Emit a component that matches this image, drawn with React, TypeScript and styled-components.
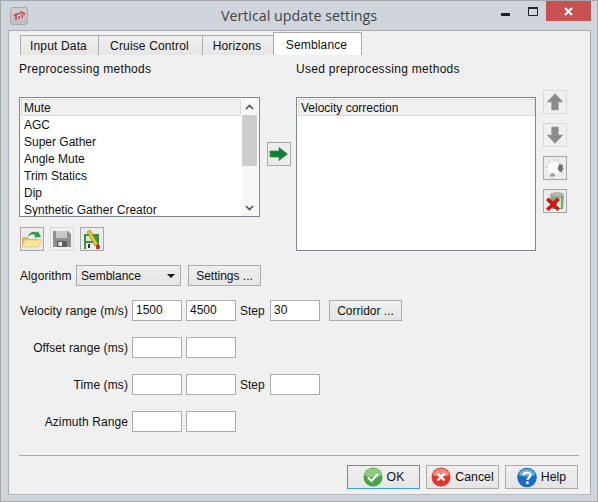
import styled, { createGlobalStyle } from 'styled-components';

const GlobalStyle = createGlobalStyle`
  html, body {
    margin: 0;
    padding: 0;
    background: #d0d5dc;
  }
  body {
    font-family: "Liberation Sans", Arial, sans-serif;
    font-size: 12px;
    color: #111;
  }
`;

const Window = styled.div`
  width: 598px;
  height: 502px;
  box-sizing: border-box;
  border: 1px solid #a4a8ad;
  background: #d0d5dc;
  display: flex;
  flex-direction: column;
`;

const TitleBar = styled.div`
  height: 29px;
  flex: none;
  display: flex;
  align-items: flex-start;
  position: relative;
`;

const AppIcon = styled.div`
  width: 16px;
  height: 16px;
  margin: 6px 0 0 9px;
  border: 1px solid #a9a9a9;
  border-radius: 3px;
  background: linear-gradient(#cfcfcf, #bdbdbd);
  display: flex;
  align-items: center;
  justify-content: center;
`;

const Title = styled.div`
  position: absolute;
  left: 0;
  right: 0;
  top: 5px;
  text-align: center;
  font-family: "Open Sans", "Noto Sans", sans-serif;
  font-size: 14.3px;
  line-height: 20px;
  color: #3f4348;
`;

const WindowControls = styled.div`
  margin-left: auto;
  margin-right: 6px;
  display: flex;
  align-items: flex-start;
`;

const WindowControl = styled.div<{ $close?: boolean }>`
  width: ${({ $close }) => ($close ? '45px' : '27px')};
  height: 20px;
  background: ${({ $close }) => ($close ? '#c75050' : 'transparent')};
  display: flex;
  align-items: center;
  justify-content: center;
`;

const Panel = styled.div`
  flex: 1;
  margin: 0 6px 6px 7px;
  border: 1px solid #a9adb2;
  border-bottom-color: #b6b9bd;
  background: #f0f0f0;
  padding: 1px 10px 0 10px;
  display: flex;
  flex-direction: column;
`;

const TabBar = styled.div`
  height: 23px;
  display: flex;
  align-items: flex-end;
  padding-left: 1px;
`;

const Tab = styled.div<{ $active?: boolean; $width: number }>`
  width: ${({ $width }) => $width}px;
  height: ${({ $active }) => ($active ? '23px' : '20px')};
  box-sizing: border-box;
  border: 1px solid #acacac;
  border-right-width: ${({ $active }) => ($active ? '1px' : '0')};
  border-bottom: none;
  background: ${({ $active }) =>
    $active ? '#fff' : 'linear-gradient(#f0f0f0, #e5e5e5)'};
  display: flex;
  align-items: center;
  justify-content: center;
  padding: 1px 2px 0 0;
  letter-spacing: 0.15px;
`;

const MethodsArea = styled.div`
  display: flex;
  height: 196px;
`;

const MethodColumn = styled.div<{ $width: number }>`
  width: ${({ $width }) => $width}px;
  flex: none;
  display: flex;
  flex-direction: column;
`;

const SectionLabel = styled.div`
  height: 14px;
  margin-top: 7px;
  line-height: 14px;
  letter-spacing: 0.3px;
`;

const ListBox = styled.div<{ $height: number }>`
  height: ${({ $height }) => $height}px;
  box-sizing: border-box;
  margin-top: 21px;
  border: 1px solid #828790;
  background: #fff;
  display: flex;
  overflow: hidden;
`;

const ListItems = styled.div`
  flex: 1;
  padding: 1px 0 0 1px;
  min-width: 0;
`;

const ListItem = styled.div<{ $selected?: boolean }>`
  height: 17px;
  box-sizing: border-box;
  line-height: 15px;
  padding: 1px 0 0 2px;
  border: 1px solid ${({ $selected }) => ($selected ? '#dcdcdc' : 'transparent')};
  background: ${({ $selected }) => ($selected ? '#f0f0f0' : 'transparent')};
  white-space: nowrap;
`;

const ScrollTrack = styled.div`
  width: 17px;
  margin-left: 1px;
  background: #f8f8f8;
  display: flex;
  flex-direction: column;
`;

const ScrollArrow = styled.div`
  width: 15px;
  height: 17px;
  flex: none;
  display: flex;
  align-items: center;
  justify-content: center;
`;

const ScrollThumb = styled.div`
  width: 15px;
  height: 51px;
  background: #cdcdcd;
`;

const ScrollGap = styled.div`
  flex: 1;
`;

const TransferColumn = styled.div`
  width: 36px;
  flex: none;
  padding: 87px 0 0 7px;
  box-sizing: border-box;
`;

const SideButtons = styled.div`
  margin: 35px 0 0 7px;
  display: flex;
  flex-direction: column;
  gap: 9px;
`;

const IconButton = styled.div<{ $disabled?: boolean }>`
  width: 24px;
  height: 24px;
  box-sizing: border-box;
  border: 1px solid ${({ $disabled }) => ($disabled ? '#d9d9d9' : '#a8a8a8')};
  background: ${({ $disabled }) => ($disabled ? '#f0f0f0' : '#ececec')};
  display: flex;
  align-items: center;
  justify-content: center;
`;

const FileButtons = styled.div`
  margin: 10px 0 0 1px;
  display: flex;
  gap: 6px;
`;

const Form = styled.div`
  margin: 14px 0 0 1px;
  display: flex;
  flex-direction: column;
`;

const AlgorithmRow = styled.div`
  height: 21px;
  display: flex;
  align-items: center;
`;

const AlgorithmLabel = styled.div`
  width: 52px;
  letter-spacing: 0.1px;
`;

const FieldRow = styled.div<{ $gap: number }>`
  height: 21px;
  margin-top: ${({ $gap }) => $gap}px;
  display: flex;
  align-items: center;
`;

const SelectBox = styled.div`
  width: 105px;
  height: 21px;
  box-sizing: border-box;
  margin-left: 4px;
  border: 1px solid #acacac;
  background: linear-gradient(#f0f0f0, #e5e5e5);
  padding: 0 5px 0 4px;
  display: flex;
  align-items: center;
  justify-content: space-between;
`;

const Button = styled.div<{ $width: number; $gap: number }>`
  width: ${({ $width }) => $width}px;
  height: 21px;
  box-sizing: border-box;
  margin-left: ${({ $gap }) => $gap}px;
  border: 1px solid #acacac;
  background: linear-gradient(#f0f0f0, #e5e5e5);
  display: flex;
  align-items: center;
  justify-content: center;
`;

const FieldLabel = styled.div`
  width: 108px;
  text-align: right;
  white-space: nowrap;
  letter-spacing: 0.1px;
`;

const Input = styled.div<{ $gap: number }>`
  width: 50px;
  height: 21px;
  box-sizing: border-box;
  margin-left: ${({ $gap }) => $gap}px;
  border: 1px solid #abadb3;
  background: #fff;
  padding-left: 3px;
  line-height: 19px;
`;

const StepLabel = styled.div`
  margin-left: 4px;
  width: 26px;
`;

const Footer = styled.div`
  margin: 23px 0 0 0;
  border-top: 1px solid #a9a9a9;
  width: 560px;
  display: flex;
  justify-content: flex-end;
  padding: 9px 1px 0 0;
  box-sizing: border-box;
  gap: 6px;
`;

const DialogButton = styled.div<{ $focused?: boolean }>`
  width: 73px;
  height: 24px;
  box-sizing: border-box;
  border: 1px solid ${({ $focused }) => ($focused ? '#3c9ae8' : '#acacac')};
  background: linear-gradient(#f0f0f0, #e5e5e5);
  display: flex;
  align-items: center;
  justify-content: center;
  gap: 4px;
  font-size: 12.3px;
`;

const methods = [
  'AGC',
  'Super Gather',
  'Angle Mute',
  'Trim Statics',
  'Dip',
  'Synthetic Gather Creator',
];

const GreenArrow = () => (
  <svg width="20" height="16" viewBox="0 0 20 16">
    <path d="M1 5h9V1.500l8.500 6.500-8.500 6.500V11H1z" fill="#0f7f35" stroke="#3d8f58" strokeWidth="0.8" />
  </svg>
);

const GreyArrow = ({ down }: { down?: boolean }) => (
  <svg width="18" height="20" viewBox="0 0 18 20">
    <path
      d={down ? 'M5.500 2h7v8H17l-8 8.500L1 10h4.500z' : 'M9 1.500l8 8.500h-4.500v8h-7v-8H1z'}
      fill="#8c8c8c"
      stroke="#a6a6a6"
      strokeWidth="0.6"
    />
  </svg>
);

const FolderIcon = () => (
  <svg width="22" height="20" viewBox="0 0 22 20">
    <path d="M1 8h6l1 2h9v8H1z" fill="#dcbd63" />
    <path d="M1 18l3-7h17l-4 7z" fill="#f9e6a0" stroke="#d2b355" strokeWidth="0.5" />
    <path d="M7 7c2-4 6-5 9-3.500L17 2l3 6-7 .5 1.500-2.500c-2-1-5-1-7.500 1.500z" fill="#2f9a4a" />
  </svg>
);

const SaveIcon = () => (
  <svg width="20" height="20" viewBox="0 0 20 20">
    <path d="M1 2h15l3 3v13H1z" fill="#8f8f8f" />
    <rect x="4" y="2" width="11" height="7" fill="#c8c8c8" />
    <rect x="5" y="12" width="10" height="6" fill="#5f5f5f" />
    <rect x="6.500" y="13" width="3.500" height="4" fill="#ececec" />
  </svg>
);

const EditSaveIcon = () => (
  <svg width="20" height="21" viewBox="0 0 20 21">
    <path d="M2 5h15v15H2z" fill="#3f8f46" />
    <rect x="4" y="7" width="6" height="5" fill="#d9ead0" />
    <rect x="4" y="14" width="10" height="6" fill="#eee" />
    <rect x="6" y="15" width="2" height="4" fill="#333" />
    <path d="M5 3l3-2 8 14-3 2z" fill="#e7c33a" stroke="#8a6d14" strokeWidth="0.6" />
    <circle cx="16" cy="18" r="2.200" fill="#d9232a" />
  </svg>
);

const SparkleIcon = () => (
  <svg width="20" height="20" viewBox="0 0 20 20">
    <circle cx="9" cy="10" r="6.500" fill="#fbfbfb" />
    <path d="M15 5l1 2 2-.5-.5 3 1.500 1.500-2 1 .5 2.500-3-1-2-3z" fill="#707070" />
    <path d="M5 16l4-1 1 3-4 1z" fill="#9a9a9a" />
    <path d="M3 3l2 2M9 0v3M1 9h2M14 1l-1 2" stroke="#d4d4d4" strokeWidth="1.5" />
  </svg>
);

const TrashIcon = () => (
  <svg width="21" height="21" viewBox="0 0 21 21">
    <path d="M5 3h14l-1 15H7z" fill="#6fae70" />
    <ellipse cx="12" cy="3.500" rx="7" ry="2.500" fill="#b4b4b4" />
    <path d="M12 7h4v10h-4z" fill="#cfe6cd" />
    <path d="M1 9l2.500-2.500L8 10.500l4.500-4L15 9l-4.500 4.500 4.500 4-2.500 2.500L8 16l-4.500 4L1 17.500l4.500-4z" fill="#d01818" />
  </svg>
);

const OkIcon = () => (
  <svg width="20" height="20" viewBox="0 0 20 20">
    <circle cx="10" cy="10" r="9.5" fill="#47a447" />
    <path d="M1.500 8a8.500 7 0 0 1 17 0c-4 3-13 3-17 0z" fill="#8fcb7f" />
    <path d="M5 10.500l3.500 3.500L15 7" fill="none" stroke="#fff" strokeWidth="2.2" />
  </svg>
);

const CancelIcon = () => (
  <svg width="20" height="20" viewBox="0 0 20 20">
    <circle cx="10" cy="10" r="9.5" fill="#e5352b" />
    <path d="M2 8a8 6.500 0 0 1 16 0c-4 2-12 2-16 0z" fill="#f28a7d" />
    <path d="M6.500 6.500l7 7M13.500 6.500l-7 7" stroke="#fff" strokeWidth="2.4" />
  </svg>
);

const HelpIcon = () => (
  <svg width="20" height="21" viewBox="0 0 20 21">
    <circle cx="10" cy="10.5" r="9.8" fill="#1b6cc4" />
    <path d="M2 8a8 6 0 0 1 16 0c-4 2-12 2-16 0z" fill="#6fa9e3" />
    <path
      d="M6.500 8c0-3 7-3.500 7 0 0 2.500-3 2.500-3 5"
      fill="none"
      stroke="#fff"
      strokeWidth="2.2"
    />
    <rect x="9" y="14.5" width="2.6" height="2.6" fill="#fff" />
  </svg>
);

export default function App() {
  return (
    <>
      <GlobalStyle />
      <Window>
        <TitleBar>
          <AppIcon>
            <svg width="13" height="11" viewBox="0 0 13 11">
              <path
                d="M1 5c2-4 5-1 6-3s4 0 5 2M3 4v5M9 3v4M6 5v3"
                stroke="#c8434b"
                strokeWidth="1.5"
                fill="none"
              />
            </svg>
          </AppIcon>
          <Title>Vertical update settings</Title>
          <WindowControls>
            <WindowControl>
              <svg width="9" height="20" viewBox="0 0 9 20">
                <rect y="12" width="9" height="3" fill="#222" />
              </svg>
            </WindowControl>
            <WindowControl>
              <svg width="10" height="20" viewBox="0 0 10 20">
                <path d="M.5 7h9v7.500h-9z" fill="none" stroke="#222" />
                <rect y="6" width="10" height="2" fill="#222" />
              </svg>
            </WindowControl>
            <WindowControl $close>
              <svg width="9" height="9" viewBox="0 0 9 9">
                <path d="M1 1l7 7M8 1l-7 7" stroke="#fff" strokeWidth="2" />
              </svg>
            </WindowControl>
          </WindowControls>
        </TitleBar>
        <Panel>
          <TabBar>
            <Tab $width={78}>Input Data</Tab>
            <Tab $width={104}>Cruise Control</Tab>
            <Tab $width={71}>Horizons</Tab>
            <Tab $width={89} $active>
              Semblance
            </Tab>
          </TabBar>
          <MethodsArea>
            <MethodColumn $width={241}>
              <SectionLabel>Preprocessing methods</SectionLabel>
              <ListBox $height={120}>
                <ListItems>
                  <ListItem $selected>Mute</ListItem>
                  {methods.map((name) => (
                    <ListItem key={name}>{name}</ListItem>
                  ))}
                </ListItems>
                <ScrollTrack>
                  <ScrollArrow>
                    <svg width="9" height="6" viewBox="0 0 9 6">
                      <path d="M1 5l3.500-3.500L8 5" fill="none" stroke="#505050" strokeWidth="1.6" />
                    </svg>
                  </ScrollArrow>
                  <ScrollThumb />
                  <ScrollGap />
                  <ScrollArrow>
                    <svg width="9" height="6" viewBox="0 0 9 6">
                      <path d="M1 1l3.500 3.500L8 1" fill="none" stroke="#505050" strokeWidth="1.6" />
                    </svg>
                  </ScrollArrow>
                </ScrollTrack>
              </ListBox>
              <FileButtons>
                <IconButton>
                  <FolderIcon />
                </IconButton>
                <IconButton $disabled>
                  <SaveIcon />
                </IconButton>
                <IconButton>
                  <EditSaveIcon />
                </IconButton>
              </FileButtons>
            </MethodColumn>
            <TransferColumn>
              <IconButton>
                <GreenArrow />
              </IconButton>
            </TransferColumn>
            <MethodColumn $width={240}>
              <SectionLabel>Used preprocessing methods</SectionLabel>
              <ListBox $height={155}>
                <ListItems>
                  <ListItem $selected>Velocity correction</ListItem>
                </ListItems>
              </ListBox>
            </MethodColumn>
            <SideButtons>
              <IconButton $disabled>
                <GreyArrow />
              </IconButton>
              <IconButton $disabled>
                <GreyArrow down />
              </IconButton>
              <IconButton>
                <SparkleIcon />
              </IconButton>
              <IconButton>
                <TrashIcon />
              </IconButton>
            </SideButtons>
          </MethodsArea>
          <Form>
            <AlgorithmRow>
              <AlgorithmLabel>Algorithm</AlgorithmLabel>
              <SelectBox>
                Semblance
                <svg width="8" height="4" viewBox="0 0 8 4">
                  <path d="M0 0h8L4 4z" fill="#111" />
                </svg>
              </SelectBox>
              <Button $width={73} $gap={7}>
                Settings ...
              </Button>
            </AlgorithmRow>
            <FieldRow $gap={14}>
              <FieldLabel>Velocity range (m/s)</FieldLabel>
              <Input $gap={4}>1500</Input>
              <Input $gap={4}>4500</Input>
              <StepLabel>Step</StepLabel>
              <Input $gap={4}>30</Input>
              <Button $width={73} $gap={9}>
                Corridor ...
              </Button>
            </FieldRow>
            <FieldRow $gap={16}>
              <FieldLabel>Offset range (ms)</FieldLabel>
              <Input $gap={4} />
              <Input $gap={4} />
            </FieldRow>
            <FieldRow $gap={16}>
              <FieldLabel>Time (ms)</FieldLabel>
              <Input $gap={4} />
              <Input $gap={4} />
              <StepLabel>Step</StepLabel>
              <Input $gap={4} />
            </FieldRow>
            <FieldRow $gap={16}>
              <FieldLabel>Azimuth Range</FieldLabel>
              <Input $gap={4} />
              <Input $gap={4} />
            </FieldRow>
          </Form>
          <Footer>
            <DialogButton $focused>
              <OkIcon />
              OK
            </DialogButton>
            <DialogButton>
              <CancelIcon />
              Cancel
            </DialogButton>
            <DialogButton>
              <HelpIcon />
              Help
            </DialogButton>
          </Footer>
        </Panel>
      </Window>
    </>
  );
}
